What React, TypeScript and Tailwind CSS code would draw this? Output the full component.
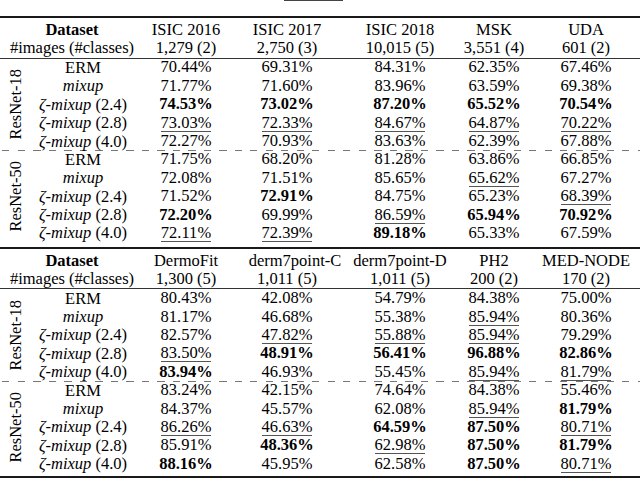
const COLS = ["w-[104px]", "w-[98px]", "w-[128px]", "w-[60px]", "w-[116px] pl-[8px]"];

type Block = { name: string; rows: string[][] };
type Section = { headers: string[]; headPad: string[]; counts: string[]; blocks: Block[] };

const sections: Section[] = [
  {
    headers: ["ISIC 2016", "ISIC 2017", "ISIC 2018", "MSK", "UDA"],
    headPad: ["", "", "", "", ""],
    counts: ["1,279 (2)", "2,750 (3)", "10,015 (5)", "3,551 (4)", "601 (2)"],
    blocks: [
      {
        name: "ResNet-18",
        rows: [
          ["70.44", "69.31", "84.31", "62.35", "67.46"],
          ["71.77", "71.60", "83.96", "63.59", "69.38"],
          ["74.53b", "73.02b", "87.20b", "65.52b", "70.54b"],
          ["73.03u", "72.33u", "84.67u", "64.87u", "70.22u"],
          ["72.27", "70.93", "83.63", "62.39", "67.88"],
        ],
      },
      {
        name: "ResNet-50",
        rows: [
          ["71.75", "68.20", "81.28", "63.86", "66.85"],
          ["72.08", "71.51", "85.65", "65.62u", "67.27"],
          ["71.52", "72.91b", "84.75", "65.23", "68.39u"],
          ["72.20b", "69.99", "86.59u", "65.94b", "70.92b"],
          ["72.11u", "72.39u", "89.18b", "65.33", "67.59"],
        ],
      },
    ],
  },
  {
    headers: ["DermoFit", "derm7point-C", "derm7point-D", "PH2", "MED-NODE"],
    headPad: ["", "pl-[16px]", "", "", ""],
    counts: ["1,300 (5)", "1,011 (5)", "1,011 (5)", "200 (2)", "170 (2)"],
    blocks: [
      {
        name: "ResNet-18",
        rows: [
          ["80.43", "42.08", "54.79", "84.38", "75.00"],
          ["81.17", "46.68", "55.38", "85.94u", "80.36"],
          ["82.57", "47.82u", "55.88u", "85.94u", "79.29"],
          ["83.50u", "48.91b", "56.41b", "96.88b", "82.86b"],
          ["83.94b", "46.93", "55.45", "85.94u", "81.79u"],
        ],
      },
      {
        name: "ResNet-50",
        rows: [
          ["83.24", "42.15", "74.64", "84.38", "55.46"],
          ["84.37", "45.57", "62.08", "85.94u", "81.79b"],
          ["86.26u", "46.63u", "64.59b", "87.50b", "80.71u"],
          ["85.91", "48.36b", "62.98u", "87.50b", "81.79b"],
          ["88.16b", "45.95", "62.58", "87.50b", "80.71u"],
        ],
      },
    ],
  },
];

const methods = [
  <span>ERM</span>,
  <span><i>mixup</i></span>,
  <span><i>ζ-mixup</i> (2.4)</span>,
  <span><i>ζ-mixup</i> (2.8)</span>,
  <span><i>ζ-mixup</i> (4.0)</span>,
];

function Value({ raw }: { raw: string }) {
  const flag = raw.slice(-1);
  const num = flag === "u" || flag === "b" ? raw.slice(0, -1) : raw;
  return (
    <span
      className={`inline-block leading-[16px] border-b ${flag === "u" ? "border-[#555]" : "border-transparent"} ${flag === "b" ? "font-bold" : ""}`}
    >
      {num}%
    </span>
  );
}

function Dashed() {
  return (
    <div className="h-[1.5px] my-[-0.75px] bg-[repeating-linear-gradient(90deg,transparent_0_2px,#777_2px_9.5px,transparent_9.5px_15.5px)]" />
  );
}

function BlockRows({ block }: { block: Block }) {
  return (
    <div className="flex">
      <div className="w-[32px] flex items-center justify-center">
        <span className="[writing-mode:vertical-rl] rotate-180 leading-none whitespace-nowrap">{block.name}</span>
      </div>
      <div className="flex flex-col">
        {block.rows.map((row, i) => (
          <div key={i} className="flex h-[18.4px] items-center">
            <div className="w-[102px] flex justify-center whitespace-nowrap leading-[16px]">{methods[i]}</div>
            {row.map((v, j) => (
              <div key={j} className={`${COLS[j]} flex justify-center whitespace-nowrap`}>
                <Value raw={v} />
              </div>
            ))}
          </div>
        ))}
      </div>
    </div>
  );
}

function TableSection({ s }: { s: Section }) {
  return (
    <>
      <div className="h-[2px] bg-[#1a1a1a]" />
      <div className="pt-[3px]">
        <div className="flex h-[18.4px] items-center">
          <div className="w-[134px] flex justify-center pl-[10px] font-bold">Dataset</div>
          {s.headers.map((h, j) => (
            <div key={j} className={`${COLS[j]} ${s.headPad[j]} flex justify-center whitespace-nowrap`}>
              {h}
            </div>
          ))}
        </div>
        <div className="flex h-[18.4px] items-center">
          <div className="w-[134px] flex justify-center pl-[10px] whitespace-nowrap">#images (#classes)</div>
          {s.counts.map((c, j) => (
            <div key={j} className={`${COLS[j]} flex justify-center whitespace-nowrap`}>
              {c}
            </div>
          ))}
        </div>
      </div>
      <div className="h-px bg-[#333]" />
      <BlockRows block={s.blocks[0]} />
      <Dashed />
      <BlockRows block={s.blocks[1]} />
    </>
  );
}

export default function App() {
  return (
    <div className="w-[640px] h-[480px] bg-white overflow-hidden font-['Liberation_Serif',serif] text-[16.5px] text-black">
      <div className="h-[16px]">
        <div className="ml-[284px] w-[59px] h-px bg-[#444]" />
      </div>
      <TableSection s={sections[0]} />
      <div className="h-[4px]" />
      <TableSection s={sections[1]} />
      <div className="h-[3px]" />
      <div className="h-[2px] bg-[#1a1a1a]" />
    </div>
  );
}
